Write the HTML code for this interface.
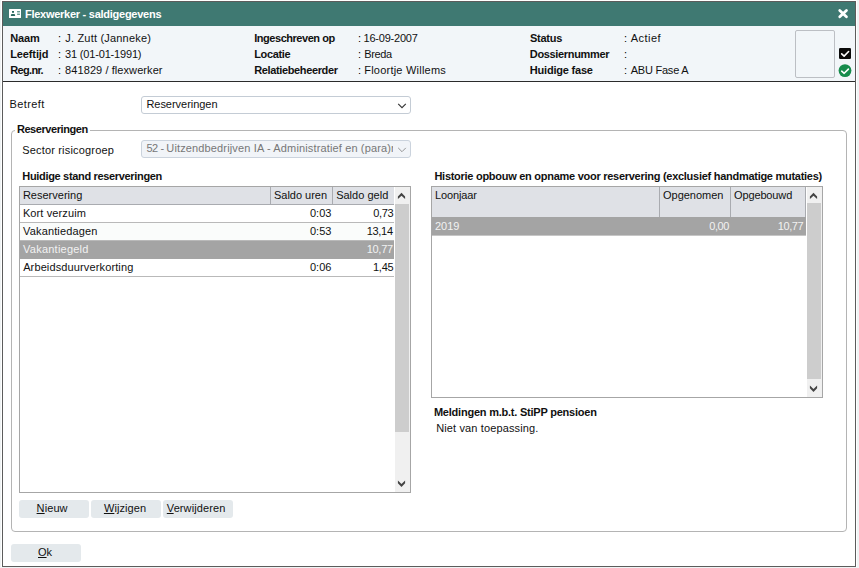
<!DOCTYPE html>
<html lang="nl">
<head>
<meta charset="utf-8">
<title>Flexwerker - saldigegevens</title>
<style>
html,body{margin:0;padding:0;}
body{width:859px;height:568px;overflow:hidden;background:#fff;position:relative;
 font-family:"Liberation Sans",Arial,sans-serif;font-size:11px;line-height:16px;color:#111;}
*{box-sizing:border-box;}
.abs{position:absolute;}
.t{position:absolute;white-space:nowrap;height:16px;line-height:16px;}
.b{font-weight:700;}
#win{position:absolute;left:2px;top:1px;width:854px;height:566px;border:1px solid #5c5c5c;background:#fff;}
#title{position:absolute;left:3px;top:2px;width:852px;height:24px;background:#3f7972;}
#hdr{position:absolute;left:3px;top:26px;width:852px;height:55px;background:#f2f6f9;}
#hdrline{position:absolute;left:3px;top:81px;width:852px;height:1px;background:#2b2b2b;}
.sel{position:absolute;left:141px;width:270px;height:18px;border:1px solid #c4ccd5;border-radius:3px;background:#fff;}
.sel.dis{background:#f1f4f8;border-color:#cbd3dd;}
.fs{position:absolute;left:11px;top:130px;width:836px;height:402px;border:1px solid #b4b4b4;border-radius:4px;}
.tbl{position:absolute;border:1px solid #a6a6a6;background:#fff;overflow:hidden;}
.th{position:absolute;top:0;background:#dfe1e6;border-right:1px solid #a9abb0;border-bottom:1px solid #a9abb0;}
.row{position:absolute;left:0;height:18px;border-bottom:1px solid #b9b9b9;}
.row.s{background:#a4a4a4;border-bottom-color:#a4a4a4;}
.sb{position:absolute;top:0;width:15px;background:#f0f0f0;}
.thumb{position:absolute;left:0;width:14px;background:#cdcdcd;}
.btn{position:absolute;width:70px;height:18px;border-radius:3px;background:#e4e9ec;}
u{text-decoration:underline;text-underline-offset:1px;}
</style>
</head>
<body>
<div class="abs" style="left:0;top:0;width:1px;height:568px;background:#eef2f3"></div>
<div class="abs" style="left:857px;top:0;width:2px;height:568px;background:#f0f4f5"></div>
<div class="abs" style="left:0;top:567px;width:859px;height:1px;background:#f0f4f5"></div>
<div id="win"></div>
<div id="title"></div>
<div id="hdr"></div>
<div id="hdrline"></div>

<!-- title icon -->
<svg class="abs" style="left:9px;top:8px" width="12" height="11" viewBox="0 0 12 11">
 <rect x="0" y="0.9" width="12" height="9.1" rx="0.5" fill="#fff"/>
 <rect x="3" y="2.9" width="2" height="1.9" rx="0.4" fill="#1f5f57"/>
 <path d="M1.9 7.9 L1.9 7.1 Q1.9 6.1 3 6.1 L5 6.1 Q6.1 6.1 6.1 7.1 L6.1 7.9 Z" fill="#2a6a62"/>
 <rect x="8.1" y="3.1" width="2.8" height="3.8" fill="#b9d2ce"/>
 <rect x="8.1" y="3.1" width="2.8" height="0.8" fill="#4f8880"/>
 <rect x="8.1" y="6.1" width="2.8" height="0.8" fill="#4f8880"/>
</svg>
<!-- close X -->
<svg class="abs" style="left:836px;top:7px" width="14" height="14" viewBox="0 0 14 14">
 <path d="M3.75 3.55 L10.45 9.8 M10.45 3.55 L3.75 9.8" stroke="#fff" stroke-width="2.8" stroke-linecap="round" fill="none"/>
</svg>

<!-- photo box -->
<div class="abs" style="left:795px;top:30px;width:40px;height:48px;border:1px solid #bcbfc4;border-radius:2px;background:#f2f6f9;"></div>
<!-- black check -->
<svg class="abs" style="left:839px;top:48px" width="12" height="11" viewBox="0 0 12 11">
 <rect x="0" y="0" width="12" height="11" rx="1.3" fill="#0a0a0a"/>
 <path d="M2.7 5.9 L5.1 8.1 L9.6 3.5" stroke="#fff" stroke-width="1.6" fill="none" stroke-linecap="round" stroke-linejoin="round"/>
</svg>
<!-- green check -->
<svg class="abs" style="left:838px;top:64px" width="14" height="14" viewBox="0 0 14 14">
 <circle cx="7" cy="6.6" r="6.4" fill="#168c4c"/>
 <path d="M3.7 7.2 L6.2 9.3 L10.4 5.1" stroke="#fff" stroke-width="1.6" fill="none" stroke-linecap="round" stroke-linejoin="round"/>
</svg>

<!-- Betreft select -->
<div class="sel" style="top:96px;">
 <svg class="abs" style="left:255px;top:5px" width="10" height="8" viewBox="0 0 10 8"><path d="M1.2 1.9 L5 5.7 L8.8 1.9" stroke="#333" stroke-width="1.1" fill="none"/></svg>
</div>

<!-- fieldset -->
<div class="fs"></div>
<div class="abs" style="left:15px;top:128px;width:75px;height:5px;background:#fff;"></div>

<div class="sel dis" style="top:140px;">
 <div class="abs" style="left:0;top:-1px;width:251px;height:16px;overflow:hidden;"><div class="t" style="left:4.4px;top:0;color:#777;letter-spacing:0.14px;"><span style="letter-spacing:-0.42px">52 - </span>Uitzendbedrijven IA - Administratief en (para)medisch</div></div>
 <svg class="abs" style="left:255px;top:5px" width="10" height="8" viewBox="0 0 10 8"><path d="M1.2 1.9 L5 5.7 L8.8 1.9" stroke="#959595" stroke-width="1" fill="none"/></svg>
</div>

<!-- left table -->
<div class="tbl" style="left:19px;top:186px;width:392px;height:307px;">
 <div class="th" style="left:0;width:251px;height:18px;"></div>
 <div class="th" style="left:251px;width:62px;height:18px;"></div>
 <div class="th" style="left:313px;width:61px;height:18px;border-right:none;"></div>
 <div class="row" style="top:18px;width:374px;"></div>
 <div class="row" style="top:36px;width:374px;background:#fafcfb;"></div>
 <div class="row s" style="top:54px;width:374px;"></div>
 <div class="row" style="top:72px;width:374px;"></div>
 <div class="sb" style="left:375px;height:305px;">
  <svg class="abs" style="left:2px;top:5px" width="9" height="8" viewBox="0 0 9 8"><polygon points="0.9,4.4 4.5,0.8 8.1,4.4 8.1,7.1 4.5,3.8 0.9,7.1" fill="#444"/></svg>
  <div class="thumb" style="top:17px;height:228px;"></div>
  <svg class="abs" style="left:2px;top:293px" width="9" height="8" viewBox="0 0 9 8"><polygon points="0.9,3.3 4.5,6.9 8.1,3.3 8.1,0.6 4.5,3.9 0.9,0.6" fill="#444"/></svg>
 </div>
</div>

<!-- buttons -->
<div class="btn" style="left:19px;top:500px;"></div>
<div class="btn" style="left:91px;top:500px;"></div>
<div class="btn" style="left:163px;top:500px;"></div>
<div class="btn" style="left:11px;top:544px;"></div>
<div class="t" style="left:36.6px;top:500px;letter-spacing:0.1px;"><u>N</u>ieuw</div>
<div class="t" style="left:103.9px;top:500px;letter-spacing:0.1px;"><u>W</u>ijzigen</div>
<div class="t" style="left:166.8px;top:500px;letter-spacing:0.1px;"><u>V</u>erwijderen</div>
<div class="t" style="left:38px;top:544px;"><u>O</u>k</div>

<!-- right table -->
<div class="tbl" style="left:431px;top:186px;width:392px;height:212px;">
 <div class="th" style="left:0;width:228px;height:30px;border-bottom:none;"></div>
 <div class="th" style="left:228px;width:71px;height:30px;border-bottom:none;"></div>
 <div class="th" style="left:299px;width:75px;height:30px;border-bottom:none;"></div>
 <div class="row s" style="top:30px;width:374px;height:19px;border-bottom:1px solid #c6c6c6;"></div>
 <div class="sb" style="left:375px;height:210px;">
  <svg class="abs" style="left:2px;top:5px" width="9" height="8" viewBox="0 0 9 8"><polygon points="0.9,4.4 4.5,0.8 8.1,4.4 8.1,7.1 4.5,3.8 0.9,7.1" fill="#444"/></svg>
  <div class="thumb" style="top:16px;height:176px;"></div>
  <svg class="abs" style="left:2px;top:198px" width="9" height="8" viewBox="0 0 9 8"><polygon points="0.9,3.3 4.5,6.9 8.1,3.3 8.1,0.6 4.5,3.9 0.9,0.6" fill="#444"/></svg>
 </div>
</div>

<div class="t b" style="left:24.93px;top:6px;letter-spacing:-0.259px;color:#fff;">Flexwerker - saldigegevens</div>
<div class="t b" style="left:10.13px;top:30px;letter-spacing:-0.118px;">Naam</div>
<div class="t b" style="left:10.13px;top:46px;letter-spacing:-0.101px;">Leeftijd</div>
<div class="t b" style="left:10.13px;top:62px;letter-spacing:-0.623px;">Reg.nr.</div>
<div class="t" style="left:57.88px;top:30px;color:#000;">:</div>
<div class="t" style="left:57.88px;top:46px;color:#000;">:</div>
<div class="t" style="left:57.88px;top:62px;color:#000;">:</div>
<div class="t" style="left:65.21px;top:30px;letter-spacing:0.197px;">J. Zutt (Janneke)</div>
<div class="t" style="left:65.07px;top:46px;letter-spacing:-0.174px;">31 (01-01-1991)</div>
<div class="t" style="left:65.11px;top:62px;letter-spacing:0.078px;">841829 / flexwerker</div>
<div class="t b" style="left:254.23px;top:30px;letter-spacing:-0.463px;">Ingeschreven op</div>
<div class="t b" style="left:254.23px;top:46px;letter-spacing:-0.363px;">Locatie</div>
<div class="t b" style="left:254.23px;top:62px;letter-spacing:-0.370px;">Relatiebeheerder</div>
<div class="t" style="left:358.08px;top:30px;color:#000;">:</div>
<div class="t" style="left:358.08px;top:46px;color:#000;">:</div>
<div class="t" style="left:358.08px;top:62px;color:#000;">:</div>
<div class="t" style="left:363.56px;top:30px;letter-spacing:-0.217px;">16-09-2007</div>
<div class="t" style="left:364.28px;top:46px;letter-spacing:-0.383px;">Breda</div>
<div class="t" style="left:364.28px;top:62px;letter-spacing:0.218px;">Floortje Willems</div>
<div class="t b" style="left:529.94px;top:30px;letter-spacing:-0.252px;">Status</div>
<div class="t b" style="left:529.83px;top:46px;letter-spacing:-0.338px;">Dossiernummer</div>
<div class="t b" style="left:529.83px;top:62px;letter-spacing:-0.207px;">Huidige fase</div>
<div class="t" style="left:623.98px;top:30px;color:#000;">:</div>
<div class="t" style="left:623.98px;top:46px;color:#000;">:</div>
<div class="t" style="left:623.98px;top:62px;color:#000;">:</div>
<div class="t" style="left:630.74px;top:30px;letter-spacing:0.463px;">Actief</div>
<div class="t" style="left:630.74px;top:62px;letter-spacing:-0.229px;">ABU Fase A</div>
<div class="t" style="left:9.58px;top:96px;letter-spacing:0.400px;">Betreft</div>
<div class="t" style="left:146.38px;top:96px;letter-spacing:-0.029px;">Reserveringen</div>
<div class="t b" style="left:16.93px;top:121px;letter-spacing:-0.436px;">Reserveringen</div>
<div class="t" style="left:22.13px;top:142px;letter-spacing:0.185px;">Sector risicogroep</div>
<div class="t b" style="left:22.33px;top:168px;letter-spacing:-0.328px;">Huidige stand reserveringen</div>
<div class="t" style="left:22.88px;top:187px;letter-spacing:0.007px;">Reservering</div>
<div class="t" style="left:274.03px;top:187px;letter-spacing:-0.018px;">Saldo uren</div>
<div class="t" style="left:336.13px;top:187px;letter-spacing:0.016px;">Saldo geld</div>
<div class="t" style="left:22.88px;top:205px;letter-spacing:0.114px;">Kort verzuim</div>
<div class="t" style="left:23.12px;top:223px;letter-spacing:0.135px;">Vakantiedagen</div>
<div class="t" style="left:23.12px;top:241px;letter-spacing:0.223px;color:#f2f2f2;">Vakantiegeld</div>
<div class="t" style="left:23.14px;top:259px;letter-spacing:0.128px;">Arbeidsduurverkorting</div>
<div class="t" style="left:310.03px;top:205px;letter-spacing:-0.032px;">0:03</div>
<div class="t" style="left:310.03px;top:223px;letter-spacing:-0.032px;">0:53</div>
<div class="t" style="left:310.03px;top:259px;letter-spacing:-0.030px;">0:06</div>
<div class="t" style="left:373.23px;top:205px;letter-spacing:-0.299px;">0,73</div>
<div class="t" style="left:366.66px;top:223px;letter-spacing:-0.289px;">13,14</div>
<div class="t" style="left:366.66px;top:241px;letter-spacing:-0.266px;color:#f2f2f2;">10,77</div>
<div class="t" style="left:372.96px;top:259px;letter-spacing:-0.208px;">1,45</div>
<div class="t b" style="left:434.43px;top:168px;letter-spacing:-0.273px;">Historie opbouw en opname voor reservering (exclusief handmatige mutaties)</div>
<div class="t" style="left:434.88px;top:187px;letter-spacing:-0.097px;">Loonjaar</div>
<div class="t" style="left:663.01px;top:187px;letter-spacing:-0.021px;">Opgenomen</div>
<div class="t" style="left:734.01px;top:187px;letter-spacing:-0.132px;">Opgebouwd</div>
<div class="t" style="left:435.00px;top:218px;letter-spacing:-0.029px;color:#f2f2f2;">2019</div>
<div class="t" style="left:709.13px;top:218px;letter-spacing:-0.364px;color:#f2f2f2;">0,00</div>
<div class="t" style="left:777.86px;top:218px;letter-spacing:-0.441px;color:#f2f2f2;">10,77</div>
<div class="t b" style="left:433.93px;top:404px;letter-spacing:-0.224px;">Meldingen m.b.t. StiPP pensioen</div>
<div class="t" style="left:436.18px;top:420px;letter-spacing:0.133px;">Niet van toepassing.</div>

</body>
</html>
